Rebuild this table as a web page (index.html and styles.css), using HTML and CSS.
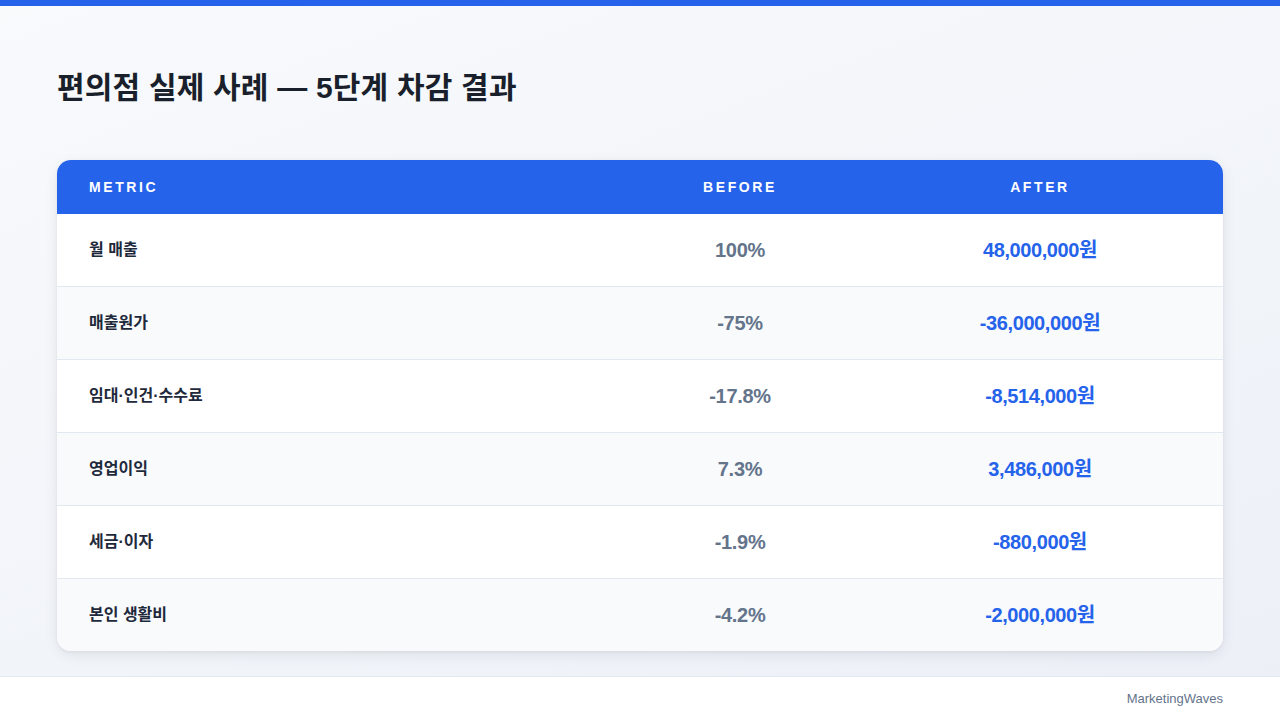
FILE: index.html
```html
<!DOCTYPE html>
<html lang="ko">
<head>
<meta charset="utf-8">
<title>편의점 실제 사례</title>
<link rel="stylesheet" href="styles.css">
</head>
<body>
<div class="topbar"></div>
<main class="main">
  <h1 class="title">편의점 실제 사례 — 5단계 차감 결과</h1>
  <div class="table">
    <div class="row head">
      <div class="cell metric">METRIC</div>
      <div class="cell center">BEFORE</div>
      <div class="cell center">AFTER</div>
    </div>
    <div class="row">
      <div class="cell metric">월 매출</div>
      <div class="cell center before">100%</div>
      <div class="cell center after">48,000,000원</div>
    </div>
    <div class="row alt">
      <div class="cell metric">매출원가</div>
      <div class="cell center before">-75%</div>
      <div class="cell center after">-36,000,000원</div>
    </div>
    <div class="row">
      <div class="cell metric">임대·인건·수수료</div>
      <div class="cell center before">-17.8%</div>
      <div class="cell center after">-8,514,000원</div>
    </div>
    <div class="row alt">
      <div class="cell metric">영업이익</div>
      <div class="cell center before">7.3%</div>
      <div class="cell center after">3,486,000원</div>
    </div>
    <div class="row">
      <div class="cell metric">세금·이자</div>
      <div class="cell center before">-1.9%</div>
      <div class="cell center after">-880,000원</div>
    </div>
    <div class="row alt last">
      <div class="cell metric">본인 생활비</div>
      <div class="cell center before">-4.2%</div>
      <div class="cell center after">-2,000,000원</div>
    </div>
  </div>
</main>
<footer class="footer">
  <span class="brand">MarketingWaves</span>
</footer>
</body>
</html>
```
FILE: styles.css
```css
* { box-sizing: border-box; }
html, body { margin: 0; padding: 0; }
body {
  width: 1280px;
  height: 720px;
  display: flex;
  flex-direction: column;
  font-family: "Liberation Sans", "Noto Sans CJK KR", sans-serif;
  background: linear-gradient(160deg, #f8fafc 0%, #f1f4f9 60%, #eceff6 100%);
  color: #1e293b;
  overflow: hidden;
}
.topbar {
  height: 6px;
  background: #2563eb;
  flex: none;
}
.main {
  flex: 1;
  padding: 62px 57px 0;
}
.title {
  margin: 0;
  font-size: 30px;
  line-height: 40px;
  font-weight: 700;
  color: #1a1f2c;
  letter-spacing: 0.2px;
}
.table {
  margin-top: 52px;
  background: #ffffff;
  border-radius: 14px;
  overflow: hidden;
  box-shadow: 0 4px 14px rgba(15, 23, 42, 0.08), 0 1px 3px rgba(15, 23, 42, 0.06);
}
.row {
  display: grid;
  grid-template-columns: 566fr 234fr 366fr;
  height: 73px;
  align-items: center;
  border-bottom: 1px solid #e2e8f0;
  background: #ffffff;
}
.row.alt { background: #f8fafc; }
.row.last { border-bottom: none; height: 72px; }
.row.head {
  height: 54px;
  background: #2563eb;
  border-bottom: none;
  color: #ffffff;
  font-size: 14px;
  font-weight: 700;
  letter-spacing: 2.6px;
}
.cell { padding: 0 32px; line-height: 20px; }
.center { text-align: center; padding: 0; }
.row .metric {
  font-size: 16px;
  font-weight: 600;
  color: #1e293b;
}
.row.head .metric {
  font-size: 14px;
  font-weight: 700;
  color: #ffffff;
}
.before {
  font-size: 20px;
  font-weight: 700;
  color: #64748b;
  letter-spacing: -0.3px;
}
.after {
  font-size: 20px;
  font-weight: 700;
  color: #2563eb;
  letter-spacing: -0.4px;
}
.footer {
  flex: none;
  height: 44px;
  background: #ffffff;
  border-top: 1px solid #e2e8f0;
  display: flex;
  align-items: center;
  justify-content: flex-end;
  padding: 0 57px;
}
.brand {
  font-size: 13px;
  color: #64748b;
}
```
